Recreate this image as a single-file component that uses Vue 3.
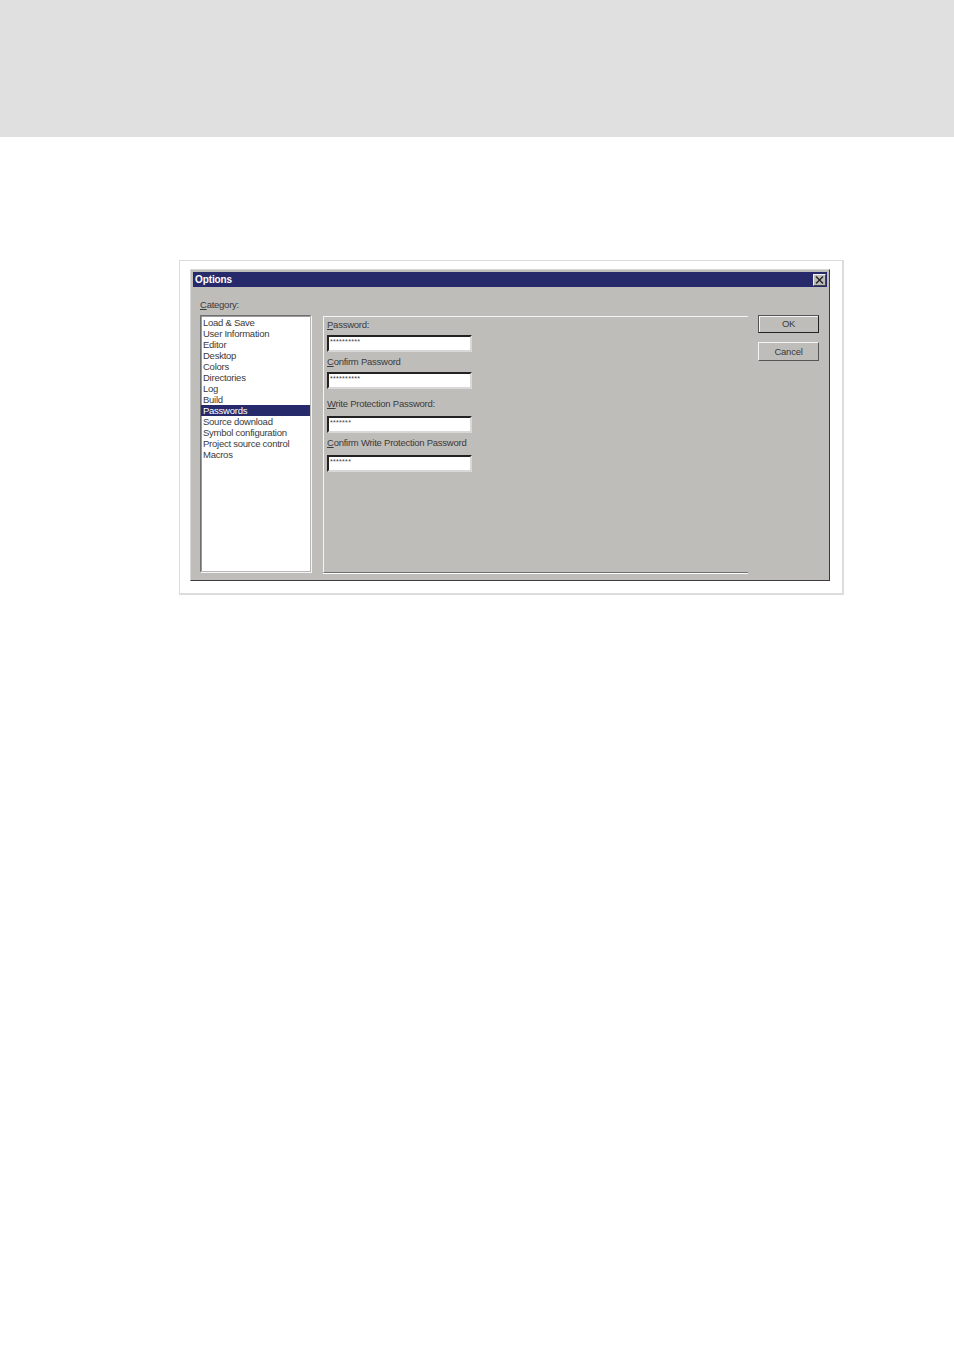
<script setup>
const categories = [
  'Load & Save',
  'User Information',
  'Editor',
  'Desktop',
  'Colors',
  'Directories',
  'Log',
  'Build',
  'Passwords',
  'Source download',
  'Symbol configuration',
  'Project source control',
  'Macros'
]

const fields = [
  { first: 'P', rest: 'assword:', mask: '**********', gap: 'first' },
  { first: 'C', rest: 'onfirm Password', mask: '**********', gap: 'small' },
  { first: 'W', rest: 'rite Protection Password:', mask: '*******', gap: 'large tall' },
  { first: 'C', rest: 'onfirm Write Protection Password', mask: '*******', gap: 'small tall' }
]
</script>

<template>
  <div class="page">
    <div class="header"></div>
    <div class="frame">
      <div class="dialog">
        <div class="titlebar">
          <span class="title">Options</span>
          <span class="close">
            <svg width="9" height="8" viewBox="0 0 9 8">
              <path d="M1 0.5 L8 7.5 M8 0.5 L1 7.5" stroke="#222" stroke-width="1.4" fill="none" />
            </svg>
          </span>
        </div>
        <div class="body">
          <div class="left">
            <div class="category"><u>C</u>ategory:</div>
            <ul class="list">
              <li v-for="c in categories" :key="c" :class="{ selected: c === 'Passwords' }">{{ c }}</li>
            </ul>
          </div>
          <div class="panel">
            <div v-for="f in fields" :key="f.first + f.rest" class="field" :class="f.gap">
              <label><u>{{ f.first }}</u>{{ f.rest }}</label>
              <div class="input">{{ f.mask }}</div>
            </div>
          </div>
          <div class="buttons">
            <button class="btn default">OK</button>
            <button class="btn">Cancel</button>
          </div>
        </div>
      </div>
    </div>
  </div>
</template>

<style>
html, body {
  background: #fff;
}
</style>

<style scoped>
.page {
  width: 954px;
  height: 1350px;
  background: #fff;
  font-family: "Liberation Sans", Arial, sans-serif;
  overflow: hidden;
}

.header {
  height: 137px;
  background: #e0e0e0;
}

.frame {
  box-sizing: border-box;
  width: 665px;
  height: 335px;
  margin: 123px 0 0 179px;
  border: 2px solid #dcdcdc;
  border-width: 1px 2px 2px 1px;
  padding: 8px 12px 12px 10px;
}

.dialog {
  box-sizing: border-box;
  width: 640px;
  height: 312px;
  background: #bfbdba;
  border: 1px solid;
  border-color: #d8d8d6 #3c3c3c #3c3c3c #d8d8d6;
  padding: 2px;
  color: #3a3a3a;
  font-size: 9.5px;
  letter-spacing: -0.25px;
}

.titlebar {
  height: 15px;
  background: #262a6b;
  display: flex;
  align-items: center;
  justify-content: space-between;
  padding: 0 1px 0 2px;
}

.title {
  color: #fff;
  font-weight: bold;
  font-size: 10px;
  letter-spacing: -0.1px;
}

.close {
  width: 13px;
  height: 12px;
  box-sizing: border-box;
  background: #bfbdba;
  border: 1px solid;
  border-color: #f2f2f2 #444 #444 #f2f2f2;
  display: flex;
  align-items: center;
  justify-content: center;
}

.body {
  display: flex;
  align-items: flex-start;
  padding: 13px 0 0 7px;
}

.left {
  width: 111px;
}

.category {
  height: 15px;
  line-height: 10px;
}

.list {
  list-style: none;
  margin: 0;
  padding: 1px 0 0;
  box-sizing: border-box;
  width: 111px;
  height: 257px;
  background: #fff;
  border: 1px solid;
  border-color: #6f6f6f #b8b8b8 #b8b8b8 #6f6f6f;
  box-shadow: inset 1px 1px 0 #9a9a9a, 1px 1px 0 #f4f4f4;
}

.list li {
  height: 11px;
  line-height: 11px;
  padding-left: 2px;
  white-space: nowrap;
}

.list li.selected {
  background: #262a6b;
  color: #fff;
}

.panel {
  box-sizing: border-box;
  width: 425px;
  height: 257px;
  margin: 16px 0 0 12px;
  padding: 3px 0 0 3px;
  border-top: 1px solid #f4f4f4;
  border-left: 1px solid #f4f4f4;
  border-bottom: 1px solid #6f6f6f;
  box-shadow: 0 1px 0 #fff;
}

.field label {
  display: block;
  height: 15px;
  line-height: 9px;
}

.field.tall label {
  height: 17px;
}

.field.small {
  margin-top: 5px;
}

.field.large {
  margin-top: 10px;
}

.input {
  box-sizing: border-box;
  width: 145px;
  height: 17px;
  background: #fff;
  border: 2px solid;
  border-color: #222 #d8d8d6 #d8d8d6 #222;
  font-size: 7px;
  line-height: 10px;
  padding-left: 1px;
  letter-spacing: 0.3px;
}

.buttons {
  display: flex;
  flex-direction: column;
  gap: 9px;
  margin: 15px 0 0 10px;
}

.btn {
  box-sizing: border-box;
  width: 61px;
  height: 19px;
  padding: 0;
  background: #bfbdba;
  border: 1px solid;
  border-color: #f4f4f4 #555 #555 #f4f4f4;
  font: 9.5px "Liberation Sans", Arial, sans-serif;
  letter-spacing: -0.25px;
  color: #3a3a3a;
}

.btn.default {
  border-color: #555 #222 #222 #555;
  box-shadow: inset 1px 1px 0 #f4f4f4;
  height: 18px;
  padding-bottom: 2px;
}
</style>
